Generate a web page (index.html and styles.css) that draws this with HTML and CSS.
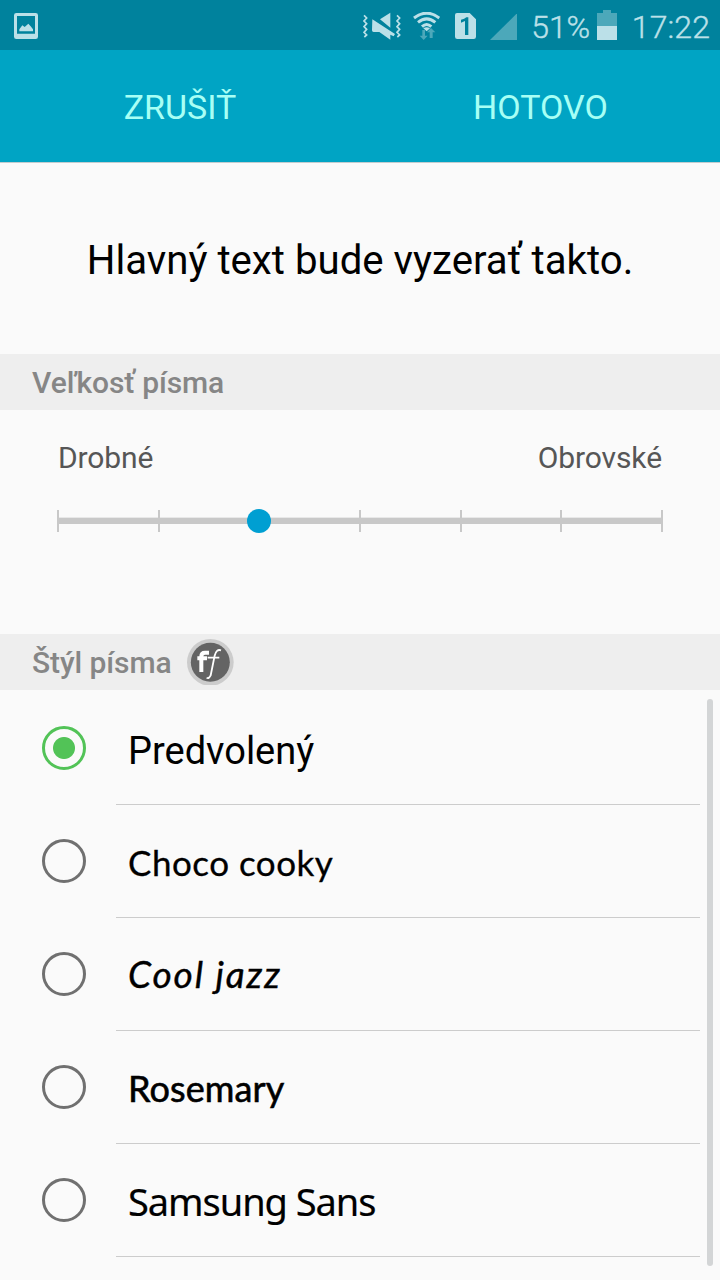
FILE: index.html
```html
<!DOCTYPE html>
<html lang="sk">
<head>
<meta charset="utf-8">
<title>Písmo</title>
<link rel="stylesheet" href="styles.css">
</head>
<body>
<header class="status">
  <svg class="ic-image" viewBox="0 0 72 78"><path fill-rule="evenodd" d="M7 0H65Q72 0 72 7V71Q72 78 65 78H7Q0 78 0 71V7Q0 0 7 0ZM9 9V62H63V9Z"/><path d="M16 55V49L25 37L32 42L43 32L50 40L57 49V55Z"/></svg>
  <div class="status-right">
    <svg class="ic-mute" viewBox="0 0 116 84"><path class="wave" d="M3 10L11 18L3 27L11 35L3 44L11 52L3 61L11 69L4 75M102 10L110 18L102 27L110 35L102 44L110 52L102 61L110 69L103 75"/><path d="M51 22L82 2V47ZM28 22L96 66L92 73L82 68V83L49 60H32Q27 60 27 55Z"/></svg>
    <svg class="ic-wifi" viewBox="0 0 82 84"><path class="arc" d="M3 18Q41 -11 79 18M15 31Q41 10 67 31M27 44Q41 31 55 44"/><path d="M31 49Q41 42 51 49L41 58Z"/><path class="dim" d="M28 54H36V71H44L32 84L20 71H28ZM50 78V61H42L54 48L67 61H59V78Z"/></svg>
    <svg class="ic-sim" viewBox="0 0 63 78"><path fill-rule="evenodd" d="M6 0H44L63 19V71Q63 78 56 78H7Q0 78 0 71V6Q0 0 6 0ZM18 20V29L30 24V66H40V13H34Q29 19 18 20Z"/></svg>
    <svg class="ic-signal" viewBox="0 0 82 81"><path class="dim" d="M82 0V81H0Z"/></svg>
    <span class="battery-text">51%</span>
    <svg class="ic-battery" viewBox="0 0 60 90"><path class="dim" d="M0 9H18V0H42V9H60V48H0Z"/><path d="M0 48H60V90H0Z"/></svg>
    <span class="clock">17:22</span>
  </div>
</header>
<nav class="actions"><span class="cancel">ZRUŠIŤ</span><span class="done">HOTOVO</span></nav>
<main>
  <section class="preview"><p>Hlavný text bude vyzerať takto.</p></section>
  <h2 class="heading"><span class="h-size">Veľkosť písma</span></h2>
  <section class="size">
    <div class="labels"><span class="small">Drobné</span><span class="huge">Obrovské</span></div>
    <svg class="slider" viewBox="0 0 606 26"><path class="track-edge" d="M0 9H606V16H0Z"/><path class="track" d="M0 10H606V16H0Z"/><path class="track" d="M0 2h2v22h-2zM101 2h2v22h-2zM302 2h2v22h-2zM403 2h2v22h-2zM503 2h2v22h-2zM604 2h2v22h-2z"/><circle class="thumb" cx="202" cy="13" r="12"/></svg>
  </section>
  <h2 class="heading"><span class="h-style">Štýl písma</span>
    <svg class="badge" viewBox="0 0 140 140"><circle class="rim" cx="70" cy="70" r="70"/><circle class="disc" cx="70" cy="70" r="58.500"/><path class="bold-f" d="M43 99V52Q43 41 54 41H66M31 58H60"/><path class="thin-f" d="M59 116Q65 121 71 109L83 50Q88 29 102 34M62 56H97"/></svg>
  </h2>
  <div class="list-wrap">
    <ul class="list">
      <li><i class="radio on"></i><div class="item"><span class="f-default">Predvolený</span></div></li>
      <li><i class="radio"></i><div class="item"><span class="f-choco">Choco cooky</span></div></li>
      <li><i class="radio"></i><div class="item"><span class="f-jazz">Cool jazz</span></div></li>
      <li><i class="radio"></i><div class="item"><span class="f-rose">Rosemary</span></div></li>
      <li><i class="radio"></i><div class="item"><span class="f-samsung">Samsung Sans</span></div></li>
    </ul>
    <div class="scrollbar"></div>
  </div>
</main>
</body>
</html>
```
FILE: styles.css
```css
* { box-sizing: border-box; margin: 0; padding: 0; }
body { width: 720px; height: 1280px; overflow: hidden; background: #fafafa; color: #000; font-family: Roboto, sans-serif; }
svg { display: block; flex: none; }
span, p { display: block; white-space: nowrap; }
.status { height: 50px; background: #00829d; color: #bbe0e8; display: flex; justify-content: space-between; align-items: flex-start; padding-left: 14px; font-size: 32px; line-height: 38px; }
.status svg { fill: #bbe0e8; }
.status .dim { fill: #4ca8ba; }
.ic-image { width: 24px; height: 26px; margin-top: 13px; }
.status-right { display: flex; width: 358px; }
.ic-mute { width: 38.667px; height: 28px; margin: 12px 0 0 1px; }
.wave { fill: none; stroke: #bbe0e8; stroke-width: 5; }
.ic-wifi { width: 27.333px; height: 28px; margin: 12px 0 0 11.500px; }
.arc { fill: none; stroke: #bbe0e8; stroke-width: 9; }
.ic-sim { width: 21px; height: 26px; margin: 13px 0 0 14.500px; }
.ic-signal { width: 27.333px; height: 27px; margin: 13px 0 0 14px; }
.battery-text { width: 66px; margin: 8px 0 0 14px; font-weight: 300; letter-spacing: -0.100px; -webkit-text-stroke: 0.400px #bbe0e8; }
.ic-battery { width: 20px; height: 30px; margin: 10px 0 0 0; }
.clock { margin: 8px 0 0 14.500px; font-weight: 300; letter-spacing: 0.100px; -webkit-text-stroke: 0.400px #bbe0e8; }
.actions { height: 113px; background: #00a4c4; border-bottom: 1px solid #c2cccf; display: grid; grid-template-columns: 1fr 1fr; align-items: center; text-align: center; color: #a7fff5; font-size: 34px; line-height: 40px; padding-top: 2px; }
.done { padding-left: 1px; }
.preview { height: 191px; display: flex; justify-content: center; align-items: center; font-size: 40.200px; padding-top: 4px; }
.heading { height: 56px; background: #eee; color: #868686; padding: 0 0 0 32px; display: flex; align-items: center; font-size: 30px; font-weight: 500; letter-spacing: -0.080px; }
.size { height: 224px; padding: 30px 57px 0; }
.labels { display: flex; justify-content: space-between; color: #565656; font-size: 30px; letter-spacing: -0.100px; line-height: 36px; padding: 0 1px; }
.slider { width: 606px; height: 26px; margin-top: 32px; }
.track { fill: #c8c8c8; }
.track-edge { fill: #e8e8e8; }
.thumb { fill: #009fd2; }
.badge { width: 46.667px; height: 46.667px; margin-left: 15.500px; }
.rim { fill: #ccc; }
.disc { fill: #646464; }
.bold-f { fill: none; stroke: #fff; stroke-width: 12; }
.thin-f { fill: none; stroke: #fff; stroke-width: 5.500; }
.list-wrap { height: 590px; display: flex; padding-top: 2px; }
.list { list-style: none; width: 700px; }
.list li { height: 113px; display: flex; padding-left: 42px; }
.radio { width: 44px; height: 44px; margin-top: 34px; border: 3px solid #707070; border-radius: 50%; flex: none; }
.radio.on { border-color: #52c357; background: radial-gradient(circle, #52c357 10.500px, transparent 11.500px); }
.item { margin-left: 30px; flex: 1; border-bottom: 1px solid #ccc; padding: 5px 0 0 12px; display: flex; align-items: center; font-size: 38px; }
.f-choco { font-family: Lato, sans-serif; font-size: 35px; letter-spacing: 0.500px; -webkit-text-stroke: 0.300px #000; margin-top: -4px; }
.f-jazz { font-family: Lato, sans-serif; font-style: italic; font-size: 37px; letter-spacing: 1.900px; -webkit-text-stroke: 0.400px #000; margin-top: -6px; }
.f-rose { font-family: Lato, sans-serif; font-size: 36px; letter-spacing: 0.100px; -webkit-text-stroke: 0.600px #000; margin-top: -3px; }
.f-samsung { font-family: "Noto Sans", sans-serif; letter-spacing: -1.050px; -webkit-text-stroke: 0.200px #000; margin-top: -4px; }
.scrollbar { width: 6px; height: 567px; margin: 7px 0 0 7px; border-radius: 3px; background: #d3d5d6; }
```
